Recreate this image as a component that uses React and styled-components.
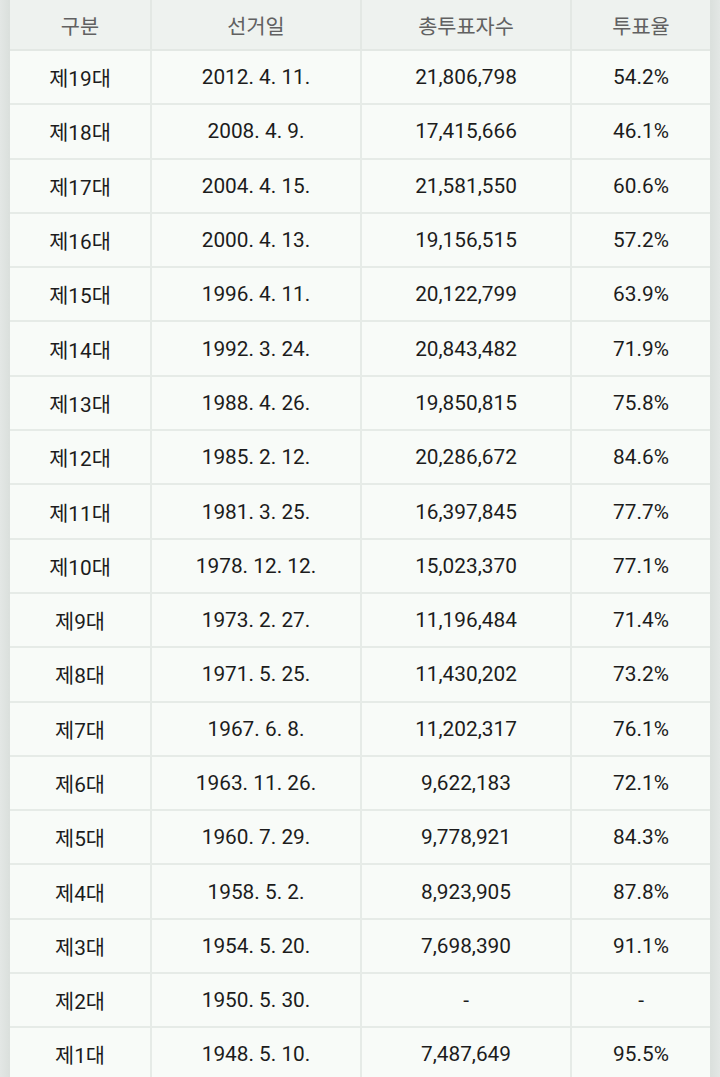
import React from 'react'
import styled, { createGlobalStyle } from 'styled-components'

const GlobalStyle = createGlobalStyle`
  html, body {
    margin: 0;
    padding: 0;
    background: #dfe4e1;
  }
  body {
    font-family: Roboto, "Noto Sans CJK KR", sans-serif;
  }
`

const widths = [141, 210, 210, 139]

const rows = [
  ['제19대', '2012. 4. 11.', '21,806,798', '54.2%'],
  ['제18대', '2008. 4. 9.', '17,415,666', '46.1%'],
  ['제17대', '2004. 4. 15.', '21,581,550', '60.6%'],
  ['제16대', '2000. 4. 13.', '19,156,515', '57.2%'],
  ['제15대', '1996. 4. 11.', '20,122,799', '63.9%'],
  ['제14대', '1992. 3. 24.', '20,843,482', '71.9%'],
  ['제13대', '1988. 4. 26.', '19,850,815', '75.8%'],
  ['제12대', '1985. 2. 12.', '20,286,672', '84.6%'],
  ['제11대', '1981. 3. 25.', '16,397,845', '77.7%'],
  ['제10대', '1978. 12. 12.', '15,023,370', '77.1%'],
  ['제9대', '1973. 2. 27.', '11,196,484', '71.4%'],
  ['제8대', '1971. 5. 25.', '11,430,202', '73.2%'],
  ['제7대', '1967. 6. 8.', '11,202,317', '76.1%'],
  ['제6대', '1963. 11. 26.', '9,622,183', '72.1%'],
  ['제5대', '1960. 7. 29.', '9,778,921', '84.3%'],
  ['제4대', '1958. 5. 2.', '8,923,905', '87.8%'],
  ['제3대', '1954. 5. 20.', '7,698,390', '91.1%'],
  ['제2대', '1950. 5. 30.', '-', '-'],
  ['제1대', '1948. 5. 10.', '7,487,649', '95.5%'],
]

const Page = styled.div`
  width: 720px;
  height: 1077px;
  overflow: hidden;
  padding: 0 10px;
  box-sizing: border-box;
  background: linear-gradient(90deg, #e3e7e5 0px, #dbe0dd 9px, #dbe0dd 711px, #e3e7e5 720px);
`

const Table = styled.table`
  width: 700px;
  border-collapse: collapse;
  table-layout: fixed;
  background: #f8fbf8;
`

const Col = styled.col`
  width: ${({ $w }) => $w}px;
`

const Th = styled.th`
  height: 49px;
  padding: 0;
  font-weight: 400;
  font-size: 20.8px;
  color: #616161;
  background: #eef2ef;
  border-right: 2px solid #e3e8e4;
  border-bottom: 2px solid #e3e8e4;
  text-align: center;
  vertical-align: middle;
  &:last-child { border-right: none; }
`

const Td = styled.td`
  height: 52.3px;
  padding: 0;
  font-size: 20.8px;
  color: #1c1c1c;
  border-right: 2px solid #e6ebe7;
  border-bottom: 2px solid #e6ebe7;
  text-align: center;
  vertical-align: middle;
  &:last-child { border-right: none; }
`

const App = () => (
  <Page>
    <GlobalStyle />
    <Table>
      <colgroup>
        {widths.map((w, i) => <Col key={i} $w={w} />)}
      </colgroup>
      <thead>
        <tr>
          <Th>구분</Th>
          <Th>선거일</Th>
          <Th>총투표자수</Th>
          <Th>투표율</Th>
        </tr>
      </thead>
      <tbody>
        {rows.map((r) => (
          <tr key={r[0]}>
            {r.map((c, i) => <Td key={i}>{c}</Td>)}
          </tr>
        ))}
      </tbody>
    </Table>
  </Page>
)

export default App
